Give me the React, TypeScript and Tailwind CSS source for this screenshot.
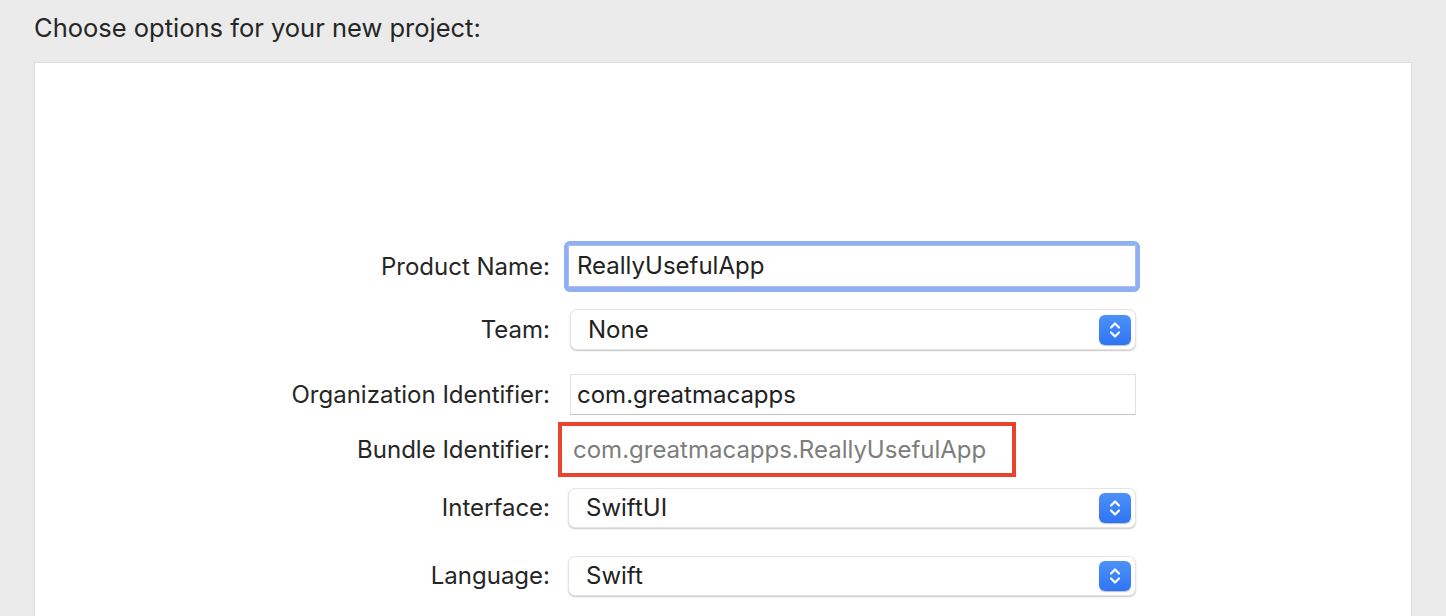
import React from 'react';

const font = { fontFamily: 'Inter, "Liberation Sans", sans-serif' };

const Stepper = () => (
  <div className="w-[32px] h-[30px] rounded-[6px] bg-gradient-to-b from-[#4d91f8] to-[#2f74f4] flex items-center justify-center shadow-[0_0.5px_1px_rgba(0,0,0,0.25)]">
    <svg width="14" height="22" viewBox="0 0 14 22" fill="none">
      <path d="M3 8.5 L7 4.5 L11 8.5" stroke="white" strokeWidth="2.2" strokeLinecap="round" strokeLinejoin="round" />
      <path d="M3 13.5 L7 17.5 L11 13.5" stroke="white" strokeWidth="2.2" strokeLinecap="round" strokeLinejoin="round" />
    </svg>
  </div>
);

const Label = ({ children }: { children: React.ReactNode }) => (
  <div className="w-[515px] shrink-0 text-right text-[24px] text-[#262626]">{children}</div>
);

const Popup = ({ value, className }: { value: string; className: string }) => (
  <div
    className={`flex items-center justify-between bg-white rounded-[7px] border border-[#e4e4e4] shadow-[0_1px_1.5px_rgba(0,0,0,0.22)] pl-[17px] pr-[4px] ${className}`}
  >
    <span className="text-[24px] text-[#222]">{value}</span>
    <Stepper />
  </div>
);

export default function App() {
  return (
    <div className="w-[1446px] h-[616px] bg-[#ebebeb] overflow-hidden" style={font}>
      <div className="pl-[34px] pt-[12px] h-[62px] text-[25.5px] leading-[32px] text-[#262626]">
        Choose options for your new project:
      </div>
      <div className="ml-[34px] w-[1378px] h-[600px] bg-white border border-[#dcdcdc]">
        <div className="flex flex-col pt-[178px]">
          {/* Product Name */}
          <div className="flex items-center h-[51px]">
            <Label>Product Name:</Label>
            <div className="ml-[14px] w-[576px] h-[51px] rounded-[6px] bg-[#8fb0f2] p-[4px] pb-[5px]">
              <div className="w-full h-full bg-white border border-[#a9bde8] flex items-center pl-[8px] text-[24px] text-[#222]">
                ReallyUsefulApp
              </div>
            </div>
          </div>

          {/* Team */}
          <div className="flex items-center h-[41px] mt-[17px]">
            <Label>Team:</Label>
            <Popup value="None" className="ml-[20px] w-[566px] h-[41px]" />
          </div>

          {/* Organization Identifier */}
          <div className="flex items-center h-[41px] mt-[24px]">
            <Label>Organization Identifier:</Label>
            <div className="ml-[20px] w-[566px] h-[41px] bg-white border border-[#e2e2e2] border-b-[#c4c4c4] flex items-center pl-[6px] text-[24px] text-[#222]">
              com.greatmacapps
            </div>
          </div>

          {/* Bundle Identifier */}
          <div className="flex items-center h-[55px] mt-[7px]">
            <Label>Bundle Identifier:</Label>
            <div className="ml-[8px] w-[458px] h-[55px] border-[4px] border-[#e8432d] flex items-center pl-[11px] text-[24px] text-[#7d7d7d]">
              com.greatmacapps.ReallyUsefulApp
            </div>
          </div>

          {/* Interface */}
          <div className="flex items-center h-[40px] mt-[11px]">
            <Label>Interface:</Label>
            <Popup value="SwiftUI" className="ml-[18px] w-[568px] h-[40px]" />
          </div>

          {/* Language */}
          <div className="flex items-center h-[40px] mt-[28px]">
            <Label>Language:</Label>
            <Popup value="Swift" className="ml-[18px] w-[568px] h-[40px]" />
          </div>
        </div>
      </div>
    </div>
  );
}
